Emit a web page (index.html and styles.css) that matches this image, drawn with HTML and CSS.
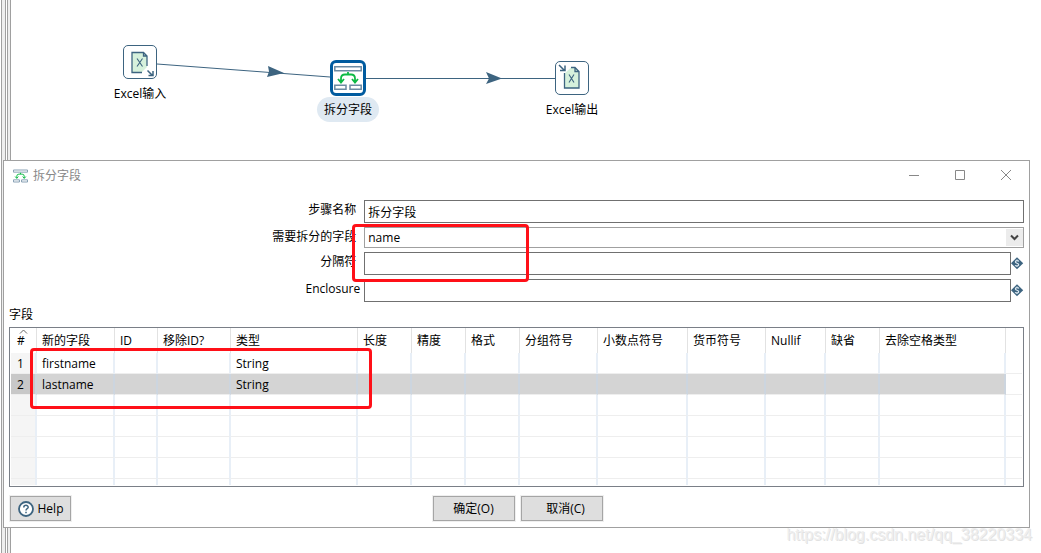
FILE: index.html
```html
<!DOCTYPE html>
<html lang="zh-CN">
<head>
<meta charset="utf-8">
<title>拆分字段</title>
<link rel="stylesheet" href="styles.css">
</head>
<body>
<svg class="defs" aria-hidden="true">
  <symbol id="diamond" viewBox="0 0 13 13">
    <path d="M6 .3 12.200 6.300 6 12.300 0 6.300Z" fill="#3d6480"/>
    <path d="M7.800 4.400C7.300 3.300 4.400 3.300 4.400 4.900 4.400 6.500 7.700 5.900 7.700 7.700 7.700 9.300 4.600 9.200 4.200 8.100M6 2.600V3.800M6 8.800V10" fill="none" stroke="#dce8f0" stroke-width="1.200"/>
  </symbol>
  <symbol id="split" viewBox="0 0 28 26">
    <path d="M.8 1.800H27.200V5.800H.8ZM.8 20.200H12V24.200H.8ZM16 20.200H27.200V24.200H16Z" fill="#fff" stroke="#6c8ba3" stroke-width="1.500"/>
    <path d="M14 7V9.500M7 17V13.500Q7 9.500 11 9.500H17Q21 9.500 21 13.500V17M4 14 7 17.500 10 14M18 14 21 17.500 24 14" fill="none" stroke="#0dba45" stroke-width="1.800"/>
  </symbol>
</svg>
<main class="app">
  <section class="canvas">
    <svg class="hops" width="620" height="130" aria-hidden="true">
      <path d="M157 64 330 77M366 78.500H555" stroke="#3d6480" fill="none"/>
      <path d="M268 66 284 73 267 77 269 71.500ZM486 72 502 78.500 486 84 489 78.500Z" fill="#3d6480"/>
    </svg>
    <div class="node node-in">
      <svg class="box" viewBox="1 1 32 32" aria-hidden="true">
        <path d="M9 7.500H20L24 11.500V22L19 27H9Z" fill="#d6f1dc"/>
        <path d="M19 27.500H9V7.500H20.500L24 11V21M20.500 7.500V11H24" fill="none" stroke="#3d6480" stroke-width="1.300"/>
        <path d="M14 13.500 19.500 21.500M19.500 13.500 14 21.500" stroke="#3d6480" stroke-width="1.100"/>
        <path d="M24.500 25.500 29.500 30.500M30 26V30.500H25.500" fill="none" stroke="#3d6480" stroke-width="1.500"/>
      </svg>
      <span class="caption">Excel输入</span>
    </div>
    <div class="node node-split">
      <span class="box active"><svg width="28" height="26" aria-hidden="true"><use href="#split"/></svg></span>
      <span class="caption pill">拆分字段</span>
    </div>
    <div class="node node-out">
      <svg class="box" viewBox="1 1 32 32" aria-hidden="true">
        <path d="M9.500 12.500 16 6.500H20L24 10.500V27H9.500Z" fill="#d6f1dc"/>
        <path d="M9.500 12V27H24V10.500L20 6.500H16M20 6.500V10.500H24" fill="none" stroke="#3d6480" stroke-width="1.300"/>
        <path d="M14 13.500 19 21.500M19 13.500 14 21.500" stroke="#3d6480" stroke-width="1.100"/>
        <path d="M4 4 9.500 9.500M10 4.500V9.500H5" fill="none" stroke="#3d6480" stroke-width="1.500"/>
      </svg>
      <span class="caption">Excel输出</span>
    </div>
  </section>

  <section class="dialog">
    <header class="titlebar">
      <svg width="15" height="14" aria-hidden="true"><use href="#split"/></svg>
      <h1>拆分字段</h1>
      <div class="controls">
        <button type="button" aria-label="最小化"><svg width="12" height="12"><path d="M1 5.500H11"/></svg></button>
        <button type="button" aria-label="最大化"><svg width="12" height="12"><path d="M1.500 .5H10.500V9.500H1.500Z"/></svg></button>
        <button type="button" aria-label="关闭"><svg width="12" height="12"><path d="M1 0 11 10M11 0 1 10"/></svg></button>
      </div>
    </header>

    <form class="form">
      <label for="step">步骤名称</label>
      <div class="field"><input id="step" type="text" value="拆分字段"></div>
      <label for="source">需要拆分的字段</label>
      <div class="field combo">
        <select id="source"><option>name</option></select>
        <svg class="chevron" width="17" height="17" aria-hidden="true"><path d="M5 6.500 8.500 10 12 6.500" fill="none" stroke="#444" stroke-width="2"/></svg>
      </div>
      <label for="delimiter">分隔符</label>
      <div class="field"><input id="delimiter" type="text"><svg class="variable" width="13" height="13" aria-hidden="true"><use href="#diamond"/></svg></div>
      <label for="enclosure" class="latin">Enclosure</label>
      <div class="field"><input id="enclosure" type="text"><svg class="variable" width="13" height="13" aria-hidden="true"><use href="#diamond"/></svg></div>
      <div class="mark mark-source"></div>
    </form>

    <div class="fields">
      <h2>字段</h2>
      <div class="grid">
        <table>
          <colgroup>
            <col class="w26"><col class="w78"><col class="w43"><col class="w73"><col class="w127"><col class="w54"><col class="w54"><col class="w54"><col class="w78"><col class="w90"><col class="w78"><col class="w60"><col class="w54"><col class="w126"><col>
          </colgroup>
          <thead>
            <tr><th><svg class="sort" width="9" height="5" aria-hidden="true"><path d="M1 4.500 4.500 1 8 4.500" fill="none" stroke="#666"/></svg>#</th><th>新的字段</th><th>ID</th><th>移除ID?</th><th>类型</th><th>长度</th><th>精度</th><th>格式</th><th>分组符号</th><th>小数点符号</th><th>货币符号</th><th>Nullif</th><th>缺省</th><th>去除空格类型</th><th></th></tr>
          </thead>
          <tbody>
            <tr><td>1</td><td>firstname</td><td></td><td></td><td>String</td><td></td><td></td><td></td><td></td><td></td><td></td><td></td><td></td><td></td><td></td></tr>
            <tr class="selected"><td>2</td><td>lastname</td><td></td><td></td><td>String</td><td></td><td></td><td></td><td></td><td></td><td></td><td></td><td></td><td></td><td></td></tr>
            <tr><td></td><td></td><td></td><td></td><td></td><td></td><td></td><td></td><td></td><td></td><td></td><td></td><td></td><td></td><td></td></tr>
            <tr><td></td><td></td><td></td><td></td><td></td><td></td><td></td><td></td><td></td><td></td><td></td><td></td><td></td><td></td><td></td></tr>
            <tr><td></td><td></td><td></td><td></td><td></td><td></td><td></td><td></td><td></td><td></td><td></td><td></td><td></td><td></td><td></td></tr>
            <tr><td></td><td></td><td></td><td></td><td></td><td></td><td></td><td></td><td></td><td></td><td></td><td></td><td></td><td></td><td></td></tr>
            <tr class="partial"><td></td><td></td><td></td><td></td><td></td><td></td><td></td><td></td><td></td><td></td><td></td><td></td><td></td><td></td><td></td></tr>
          </tbody>
        </table>
      </div>
      <div class="mark mark-rows"></div>
    </div>

    <footer class="actions">
      <button type="button" class="btn help"><svg width="16" height="16" aria-hidden="true"><circle cx="8" cy="8" r="7" fill="#fff" stroke="#3d6480" stroke-width="1.800"/><path d="M5.800 6.400C5.800 3.600 10.200 3.700 10.200 6.200 10.200 7.800 8 7.600 8 9.500M8 10.700V12.200" fill="none" stroke="#3d6480" stroke-width="1.500"/></svg>Help</button>
      <div class="pair">
        <button type="button" class="btn">确定(O)</button>
        <button type="button" class="btn cancel">取消(C)</button>
      </div>
    </footer>
  </section>
  <p class="watermark">https://blog.csdn.net/qq_38220334</p>
</main>
</body>
</html>
```
FILE: styles.css
```css
* { box-sizing: border-box; }

body {
  margin: 0;
  background: #fff;
  color: #000;
  font: 12px/18px "Open Sans", "Noto Sans CJK SC", sans-serif;
}

button, input, select { font: inherit; color: inherit; }

h1, h2, p { margin: 0; font-size: 12px; font-weight: 400; }

.defs { position: absolute; width: 0; height: 0; }

.app {
  position: relative;
  min-height: 100vh;
  background: linear-gradient(90deg,
    #fff 1px, #a0a0a0 1px 2px, #eee 2px 5px, #a0a0a0 5px 6px,
    #fff 6px 7px, #a0a0a0 7px 8px, #eee 8px 10px, #a0a0a0 10px 11px, #fff 11px);
}

/* Transformation canvas */
.canvas { position: relative; height: 160px; }

.hops { position: absolute; left: 0; top: 0; }

.node {
  position: absolute;
  display: flex;
  flex-direction: column;
  align-items: center;
  width: 80px;
}

.node-in { left: 100px; top: 45px; }
.node-split { left: 308px; top: 60px; }
.node-out { left: 532px; top: 61px; }

.box {
  width: 34px;
  height: 34px;
  border: 1px solid #3d6480;
  border-radius: 5px;
  background: #fff;
}

.box.active {
  display: flex;
  align-items: center;
  justify-content: center;
  width: 36px;
  height: 36px;
  border: 3px solid #005b9f;
  border-radius: 6px;
}

.caption { padding-top: 6px; white-space: nowrap; }

.pill {
  margin-top: 1px;
  padding: 4px 7px 3px;
  border-radius: 13px;
  background: #dfe9f2;
}

/* Dialog */
.dialog {
  margin: 0 11px 0 3px;
  border: 1px solid #a0a0a0;
  background: #fff;
}

.titlebar {
  display: flex;
  align-items: center;
  gap: 5px;
  height: 29px;
  padding: 0 0 0 9px;
  color: #888;
}

.controls { display: flex; margin-left: auto; }

.controls button {
  display: flex;
  align-items: center;
  justify-content: center;
  width: 46px;
  height: 28px;
  padding: 0;
  border: 0;
  background: none;
}

.controls svg { overflow: visible; }
.controls path { fill: none; stroke: #888; }

.form {
  position: relative;
  display: grid;
  grid-template-columns: 35% 1fr;
  row-gap: 4px;
  padding: 10px 5px 0;
}

.form label { padding: 1px 8px 0 0; text-align: right; }
.form .latin { padding-right: 4px; }

.field { display: flex; align-items: center; }

.field input, .field select {
  flex: 1;
  min-width: 0;
  height: 23px;
  padding: 0 3px;
  border: 1px solid #707070;
  border-radius: 0;
  background: #fff;
}

.field select {
  height: 21px;
  border-color: #a0a0a0;
  appearance: none;
}

.combo { position: relative; }

.chevron {
  position: absolute;
  right: 1px;
  top: 2px;
  background: #ececec;
  pointer-events: none;
}

.mark {
  position: absolute;
  border: 3px solid #ff1018;
  border-radius: 4px;
  pointer-events: none;
}

.mark-source { left: calc(35% - 11px); top: 34px; width: 177px; height: 58px; }
.mark-rows { left: 26px; top: 46px; width: 342px; height: 61px; }

/* Field grid */
.fields { position: relative; padding: 4px 5px 0; }

.fields h2 { padding-bottom: 3px; }

.grid { padding: 0 1px 1px; border: 1px solid #7a7f87; }

table {
  width: 100%;
  border-collapse: separate;
  border-spacing: 0;
  table-layout: fixed;
}

th, td {
  padding: 0 0 0 5px;
  border-right: 2px solid #e8eff7;
  text-align: left;
  font-weight: 400;
  white-space: nowrap;
}

th {
  position: relative;
  height: 25px;
  border-right: 1px solid #e2e2e2;
}

td { height: 21px; padding-top: 2px; border-bottom: 1px solid #eee; }

th:last-child, td:last-child { border-right: 0; }

th:first-child, td:first-child { padding-left: 6px; }

td:first-child { background: #f5f5f5; }

.sort { position: absolute; left: 8px; top: 1px; }

.selected td { background: #d4d4d4; }
.selected td:first-child { background: #c8c8c8; }
.selected td:last-child { background: #fff; }
.selected td:not(:last-child) { border-right-color: #ccd5df; }

.partial td { height: 6px; border-bottom: 0; }

.w26 { width: 26px; }
.w43 { width: 43px; }
.w54 { width: 54px; }
.w60 { width: 60px; }
.w73 { width: 73px; }
.w78 { width: 78px; }
.w90 { width: 90px; }
.w126 { width: 126px; }
.w127 { width: 127px; }

.actions {
  display: grid;
  grid-template-columns: 1fr auto 1fr;
  align-items: center;
  padding: 9px 4px 6px 6px;
}

.pair { display: flex; gap: 6px; }

.btn {
  width: 82px;
  height: 25px;
  padding: 0;
  border: 1px solid #a5a5a5;
  border-radius: 0;
  outline: 1px solid #efefef;
  background: #dedede;
}

.help {
  display: flex;
  align-items: center;
  justify-content: center;
  gap: 4px;
  width: 61px;
}

.cancel { padding-left: 8px; }

.watermark {
  position: absolute;
  right: 9px;
  bottom: 8px;
  color: #eee;
  font: 16px/20px "Liberation Sans", sans-serif;
  text-shadow: 1px 1px 0 #e2e2e2;
}
```
